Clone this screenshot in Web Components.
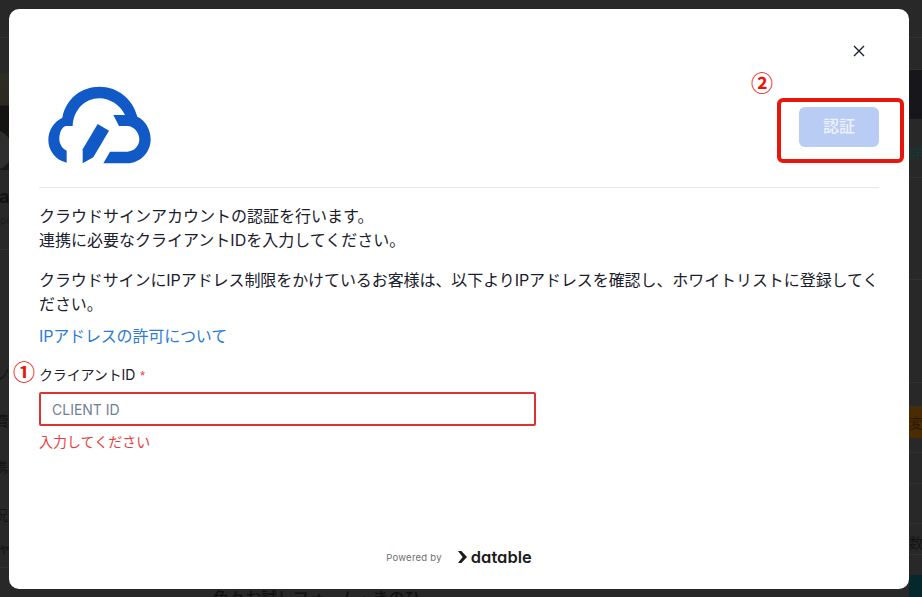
<!DOCTYPE html>
<html lang="ja">
<head>
<meta charset="utf-8">
<title>クラウドサイン認証</title>
<style>
  html, body { margin: 0; height: 100%; overflow: hidden; background: #282828; }
  body { font-family: "Inter", "Noto Sans CJK JP", sans-serif; }
  .tight { letter-spacing: -0.08px; }
</style>
</head>
<body>
<back-page></back-page>
<auth-modal>
  <p>クラウドサインアカウントの認証を行います。<br>連携に必要なクライアントIDを入力してください。</p>
  <p class="tight">クラウドサインにIPアドレス制限をかけているお客様は、以下よりIPアドレスを確認し、ホワイトリストに登録してください。</p>
</auth-modal>

<script>
class BackPage extends HTMLElement {
  constructor() {
    super();
    this.attachShadow({ mode: 'open' });
    this.shadowRoot.innerHTML = /* html */ `
      <style>
        :host {
          display: flex;
          height: 597px;
          overflow: hidden;
          color: #141414;
          font-size: 14px;
        }
        .left { width: 9px; flex: none; display: flex; flex-direction: column; overflow: hidden; }
        .mid { flex: 1; display: flex; flex-direction: column; justify-content: flex-end; padding-left: 204px; }
        .right { width: 13px; flex: none; display: flex; flex-direction: column; overflow: hidden; }
        .row {
          box-sizing: border-box;
          flex: none;
          border-bottom: 1px solid #303030;
          white-space: nowrap;
          line-height: 20px;
        }
        .plain { border: 0; }
        .photo {
          height: 96px;
          border: 0;
          background:
            radial-gradient(circle at -8px 76px, #2e2e2e 20px, transparent 21px),
            linear-gradient(#2f2c22 0, #2b2a22 32%, #141210 34%, #1a1714 100%);
        }
        .band { background: #17171b; border: 0; }
        .orange { background: #4a2c03; border: 0; line-height: 31px; color: #2b1a04; }
        .teal { background: #04282c; border: 0; margin-top: auto; height: 22px; }
        .cap { font-size: 16px; height: 9px; line-height: 20px; overflow: hidden; font-weight: 500; color: #111; }
        .big { font-size: 18px; font-weight: 700; color: #111; margin-left: -1px; }
        .sub { display: block; margin-top: 5px; font-size: 10px; line-height: 14px; color: #1c1c1c; }
      </style>
      <div class="left">
        <div class="row" style="height:38px"></div>
        <div class="row plain" style="height:36px"></div>
        <div class="row photo"></div>
        <div class="row" style="height:80px;padding-top:17px"><span class="big">a</span><span class="sub">pe</span></div>
        <div class="row plain" style="height:134px;padding-top:114px;margin-left:-3px">ノ</div>
        <div class="row plain" style="height:47px;padding-top:27px;margin-left:-5px">費</div>
        <div class="row plain" style="height:46px;padding-top:26px;margin-left:-6px">携</div>
        <div class="row plain" style="height:48px;padding-top:28px;margin-left:-6px">況</div>
        <div class="row" style="height:43px;padding-top:13px;margin-left:-3px">ャ</div>
      </div>
      <div class="mid"><div class="cap">色々お試しフォーム・きのひ</div></div>
      <div class="right">
        <div class="row" style="height:38px"></div>
        <div class="row" style="height:32px"></div>
        <div class="row band" style="height:49px"></div>
        <div class="row" style="height:59px;padding-top:24px;color:#0c3a40">詳し</div>
        <div class="row" style="height:102px"></div>
        <div class="row" style="height:103px"></div>
        <div class="row" style="height:24px"></div>
        <div class="row orange" style="height:31px">変</div>
        <div class="row" style="height:15px"></div>
        <div class="row" style="height:31px"></div>
        <div class="row" style="height:40px"></div>
        <div class="row" style="height:31px;padding-top:9px">数</div>
        <div class="teal"></div>
      </div>
    `;
  }
}

class LogoCloud extends HTMLElement {
  constructor() {
    super();
    this.attachShadow({ mode: 'open' });
    this.shadowRoot.innerHTML = /* html */ `
      <style>
        :host { display: block; width: 120px; height: 100px; }
        svg { display: block; }
      </style>
      <svg width="120" height="100" viewBox="27 27 360 300" fill="#1059c6">
        <path d="M110 278 C75 270 55 240 55 210 C55 180 72 155 97 143 C108 85 155 50 208 50 C262 50 308 85 322 140 C345 150 362 178 362 208 C362 248 330 280 292 280 L220 280 L240 245 L292 245 C312 245 328 228 328 208 C328 188 312 168 292 168 L267 168 L250 135 L285 135 C270 105 240 85 208 85 C165 85 130 120 128 168 L108 168 C95 170 88 190 88 207 C88 222 97 236 110 242 Z"/>
        <path d="M203 162 L237 182 L190 262 L158 280 L158 238 Z"/>
      </svg>
    `;
  }
}

class AuthButton extends HTMLElement {
  constructor() {
    super();
    this.attachShadow({ mode: 'open' });
    this.shadowRoot.innerHTML = /* html */ `
      <style>
        :host {
          box-sizing: border-box;
          display: flex;
          align-items: center;
          justify-content: center;
          width: 80px;
          height: 40px;
          padding-bottom: 5px;
          border-radius: 6px;
          background: #b9ccf4;
          color: #eef2fc;
          font-size: 16px;
          font-weight: 500;
        }
      </style>
      <slot></slot>
    `;
  }
}

class ClientField extends HTMLElement {
  constructor() {
    super();
    this.attachShadow({ mode: 'open' });
    this.shadowRoot.innerHTML = /* html */ `
      <style>
        :host { display: block; }
        label {
          display: block;
          height: 20px;
          font-size: 14px;
          line-height: 20px;
          font-weight: 400;
          letter-spacing: -0.15px;
          color: #1a202c;
        }
        .req { color: #e53e3e; margin-left: 5px; font-family: "Liberation Sans", sans-serif; font-size: 13px; }
        .box {
          box-sizing: border-box;
          display: flex;
          align-items: center;
          width: 497px;
          height: 34px;
          margin-top: 7px;
          padding: 0 11px;
          border: 2px solid #e03131;
          border-radius: 2px;
          color: #718096;
          font-size: 14px;
        }
        .err {
          margin-top: 6px;
          font-size: 14px;
          line-height: 20px;
          color: #e53e3e;
        }
      </style>
      <label>クライアントID<span class="req">*</span></label>
      <div class="box">CLIENT ID</div>
      <div class="err">入力してください</div>
    `;
  }
}

class PoweredBy extends HTMLElement {
  constructor() {
    super();
    this.attachShadow({ mode: 'open' });
    this.shadowRoot.innerHTML = /* html */ `
      <style>
        :host {
          display: flex;
          align-items: center;
          justify-content: center;
          height: 20px;
          color: #6e6e6e;
          font-size: 9.5px;
          letter-spacing: 0.25px;
        }
        .mark { margin-left: 16px; display: block; }
        .name {
          margin-left: 4px;
          color: #1c1c1c;
          font-size: 16.5px;
          font-weight: 600;
          letter-spacing: 0;
          font-feature-settings: "cv11";
        }
      </style>
      <span>Powered by</span>
      <svg class="mark" width="9" height="12" viewBox="0 0 9 12" fill="#1c1c1c">
        <path d="M0 0 H3.4 L9 6 L3.4 12 H0 L4.6 6 Z"/>
      </svg>
      <span class="name">datable</span>
    `;
  }
}

class AuthModal extends HTMLElement {
  constructor() {
    super();
    this.attachShadow({ mode: 'open' });
    this.shadowRoot.innerHTML = /* html */ `
      <style>
        :host {
          position: fixed;
          top: 9px;
          left: 9px;
          box-sizing: border-box;
          display: flex;
          flex-direction: column;
          width: 900px;
          height: 580px;
          padding: 0 30px 22px;
          border-radius: 10px;
          background: #fff;
          color: #1a202c;
          font-family: "Inter", "Noto Sans CJK JP", sans-serif;
        }
        header {
          display: flex;
          justify-content: space-between;
          align-items: flex-start;
          padding: 70px 0 8px;
          border-bottom: 1px solid #e2e8f0;
        }
        auth-button { margin-top: 28px; }
        .close {
          position: absolute;
          top: 36px;
          right: 44px;
          width: 12px;
          height: 12px;
        }
        .text { padding-top: 16px; font-size: 16px; line-height: 24px; }
        ::slotted(p) { margin: 0 0 16px; }
        a {
          display: block;
          margin-top: -8px;
          font-size: 16px;
          line-height: 24px;
          letter-spacing: -0.15px;
          color: #2b7bd6;
          text-decoration: none;
        }
        client-field { margin-top: 17px; }
        powered-by { margin-top: auto; }
        .note {
          position: absolute;
          color: #e8170c;
          font-family: "Noto Sans CJK JP", sans-serif;
          font-size: 22px;
          font-weight: 700;
          line-height: 26px;
        }
        .mark-box {
          position: absolute;
          top: 89px;
          left: 768px;
          box-sizing: border-box;
          width: 127px;
          height: 65px;
          border: 4px solid #e8170c;
          border-radius: 6px;
        }
      </style>
      <header>
        <logo-cloud></logo-cloud>
        <auth-button>認証</auth-button>
      </header>
      <svg class="close" viewBox="0 0 12 12" stroke="#1a202c" stroke-width="1.4" fill="none">
        <path d="M1 1 L11 11 M11 1 L1 11"/>
      </svg>
      <div class="text"><slot></slot></div>
      <a href="#">IPアドレスの許可について</a>
      <client-field></client-field>
      <powered-by></powered-by>
      <div class="mark-box"></div>
      <span class="note" style="left:742px;top:59px">②</span>
      <span class="note" style="left:4px;top:348px">①</span>
    `;
  }
}

customElements.define('back-page', BackPage);
customElements.define('logo-cloud', LogoCloud);
customElements.define('auth-button', AuthButton);
customElements.define('client-field', ClientField);
customElements.define('powered-by', PoweredBy);
customElements.define('auth-modal', AuthModal);
</script>
</body>
</html>
